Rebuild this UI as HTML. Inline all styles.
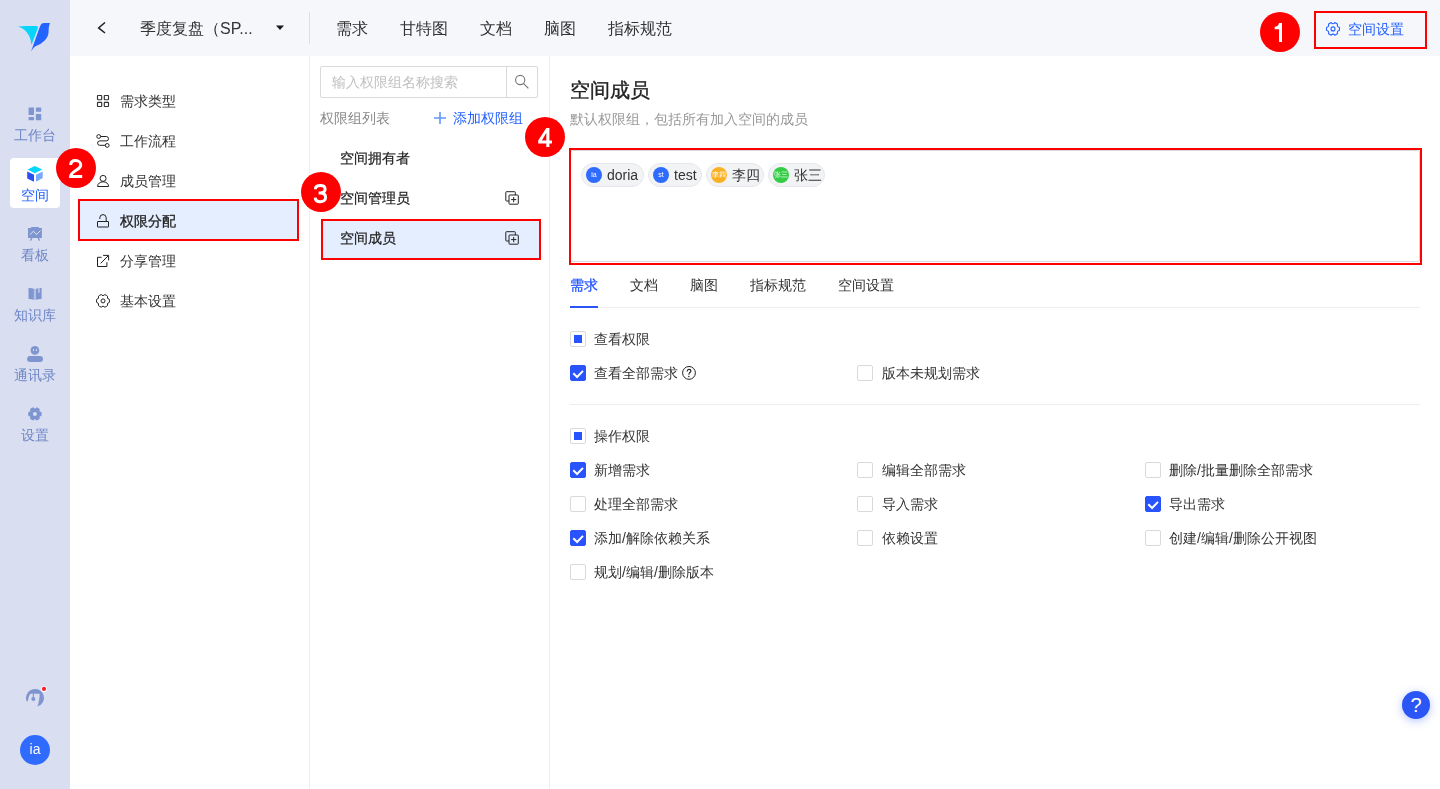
<!DOCTYPE html>
<html><head><meta charset="utf-8">
<style>
*{margin:0;padding:0;box-sizing:border-box}
html,body{width:1440px;height:789px;overflow:hidden;background:#fff;font-family:"Liberation Sans",sans-serif;color:#333}
.a{position:absolute}
.t{position:absolute;white-space:nowrap;line-height:1;will-change:transform}
#side{left:0;top:0;width:70px;height:789px;background:#d9def0}
#top{left:70px;top:0;width:1370px;height:56px;background:#f5f7fb}
.snav{left:0;width:70px;text-align:center;font-size:14px;color:#6f87c7}
.sico{position:absolute}
.red{position:absolute;border:2px solid #f00}
.num{position:absolute;width:40px;height:40px;border-radius:50%;background:#f00;color:#fff;font-weight:bold;font-size:25px;text-align:center;line-height:40px}
.menu{left:120px;font-size:14px;color:#333}
.mico{position:absolute;left:94px}
.nav{top:21px;font-size:16px;color:#333}
.tab{top:278px;font-size:14px;color:#333}
.md{-webkit-text-stroke:0.2px currentColor}
.cb{position:absolute;width:16px;height:16px;border:1px solid #d9d9d9;border-radius:2px;background:#fff}
.cb.on{background:#2953fd;border-color:#2953fd}
.cb svg{position:absolute;left:-1px;top:-1px}
.cb.ind::after{content:"";position:absolute;left:3px;top:3px;width:8px;height:8px;background:#2953fd}
.lbl{position:absolute;font-size:14px;color:#333;white-space:nowrap;line-height:1;will-change:transform}
.tag{position:absolute;will-change:transform;top:163px;height:24px;border-radius:12px;background:#f2f3f5;border:1px solid #e6e7eb}
.av{position:absolute;left:4px;top:3px;width:16px;height:16px;border-radius:50%;color:#fff;font-size:7px;line-height:16px;text-align:center;overflow:hidden}
.tn{position:absolute;left:25px;top:3px;font-size:14px;line-height:16px;color:#333;white-space:nowrap}
</style></head><body>
<!-- sidebar -->
<div id="side" class="a"></div>
<svg class="a" style="left:16px;top:20px" width="36" height="36" viewBox="0 0 36 36">
  <path d="M2 6.4 C8 6 14 5.9 20.5 5.9 Q22.4 6.2 21.9 8 L15.4 25 C15 19 13 10 2 6.4 Z" fill="#05d4fb"/>
  <path d="M15 31.5 L23.7 7.3 C24.5 4.5 26 3 28 3 L34 3 C33 5 32.6 8 32.6 11.4 C32.6 18 27 23 20.5 25.8 C18 27 16.5 29 15 31.5 Z" fill="#2563ff"/>
</svg>

<svg class="sico" style="left:24px;top:103px" width="22" height="22" viewBox="0 0 22 22"><g fill="#7f95cf"><rect x="4.6" y="4.5" width="5.4" height="7.4" rx="0.3"/><rect x="11.9" y="4.6" width="5.3" height="4.2" rx="0.3"/><rect x="4.6" y="13.9" width="5.4" height="3.3" rx="0.3"/><rect x="11.9" y="11" width="5.3" height="6.2" rx="0.3"/></g></svg>
<div class="t snav" style="top:128px">工作台</div>

<div class="a" style="left:10px;top:158px;width:50px;height:50px;background:#fff;border-radius:4px"></div>
<svg class="sico" style="left:24px;top:162px" width="22" height="24" viewBox="0 0 22 24"><path d="M10.8 4 L18.3 7.5 L10.8 11.2 L3.6 7.5Z" fill="#05d4fb"/><path d="M3.2 9.4 L10 12.8 L10 19.8 L3.2 16.4Z" fill="#2a4ff5"/><path d="M12 12.8 L18.7 9.4 L18.7 16.1 L12 19.8Z" fill="#7aa8ff"/></svg>
<div class="t snav" style="top:188px;color:#2360fd">空间</div>

<svg class="sico" style="left:24px;top:223px" width="22" height="22" viewBox="0 0 22 22"><path d="M4 5 L7.1 5 L7.1 3.9 L14.9 3.9 L14.9 5 L17.9 5 L17.9 15.1 L4 15.1Z" fill="#7f95cf"/><path d="M6 11.6 L9.5 8.2 L12.5 11.6 L16.5 7.5" stroke="#dfe4f3" stroke-width="1" fill="none"/><path d="M6.4 17.6 L7.8 15.1 M15.6 17.6 L14.2 15.1" stroke="#7f95cf" stroke-width="1.3"/></svg>
<div class="t snav" style="top:248px">看板</div>

<svg class="sico" style="left:24px;top:283px" width="22" height="22" viewBox="0 0 22 22"><path d="M4.5 4.9 C6.5 4.9 8.5 5.3 9.9 5.8 L9.9 16.8 C8.5 16.3 6.5 16.1 4.5 16.1Z" fill="#7f95cf"/><path d="M17.6 4.9 C15.6 4.9 13.4 5.3 12 5.8 L12 16.8 C13.4 16.3 15.6 16.1 17.6 16.1Z" fill="#7f95cf"/><rect x="9.9" y="5.8" width="2.1" height="11" fill="#b3bfe3"/><rect x="13.9" y="5" width="2" height="4.8" fill="#b3bfe3"/></svg>
<div class="t snav" style="top:308px">知识库</div>

<svg class="sico" style="left:24px;top:343px" width="22" height="22" viewBox="0 0 22 22"><circle cx="10.9" cy="7.4" r="4.3" fill="#7f95cf"/><rect x="9.1" y="6" width="0.9" height="2" fill="#dfe4f3"/><rect x="11.9" y="6" width="0.9" height="2" fill="#dfe4f3"/><rect x="3.1" y="13.1" width="15.9" height="5.9" rx="2.95" fill="#7f95cf"/></svg>
<div class="t snav" style="top:368px">通讯录</div>

<svg class="sico" style="left:24px;top:403px" width="22" height="22" viewBox="0 0 22 22"><path fill-rule="evenodd" d="M17.40 8.91 A6.80 6.80 0 0 1 17.40 12.89 Q14.52 12.99 15.87 15.54 A6.80 6.80 0 0 1 12.43 17.53 Q10.90 15.07 9.37 17.53 A6.80 6.80 0 0 1 5.93 15.54 Q7.28 12.99 4.40 12.89 A6.80 6.80 0 0 1 4.40 8.91 Q7.28 8.81 5.93 6.26 A6.80 6.80 0 0 1 9.37 4.27 Q10.90 6.73 12.43 4.27 A6.80 6.80 0 0 1 15.87 6.26 Q14.52 8.81 17.40 8.91Z M10.9 8.9 A2 2 0 1 0 10.9 12.9 A2 2 0 1 0 10.9 8.9Z" fill="#7f95cf"/></svg>
<div class="t snav" style="top:428px">设置</div>

<!-- bottom sidebar -->
<svg class="sico" style="left:22px;top:682px" width="28" height="28" viewBox="0 0 28 28"><path d="M4.6 19.2 A9 9 0 1 1 15.3 24.6 C16.8 21 17.8 15.5 17.6 11.7 L8.4 11.7 C7 13.5 6 16.5 5.9 19.2 Z" fill="#7f95cf"/><rect x="10.8" y="11.5" width="1.1" height="5" fill="#7f95cf"/><circle cx="11.3" cy="17.1" r="2" fill="#7f95cf"/><circle cx="22" cy="6.9" r="2.9" fill="#fff"/><circle cx="22" cy="6.9" r="2.1" fill="#f5222d"/></svg>
<div class="a" style="left:20px;top:735px;width:30px;height:30px;border-radius:50%;background:#2f6bff;color:#fff;font-size:14px;line-height:28px;text-align:center;will-change:transform">ia</div>

<!-- top bar -->
<div id="top" class="a"></div>
<svg class="a" style="left:96px;top:22px" width="12" height="13" viewBox="0 0 12 13"><path d="M9 0.5 L2.6 5.9 L9 11" stroke="#222" stroke-width="1.5" fill="none"/></svg>
<div class="t nav" style="left:140px">季度复盘（SP...</div>
<svg class="a" style="left:275px;top:25px" width="10" height="6" viewBox="0 0 10 6"><path d="M1 0.5 L9 0.5 L5 5Z" fill="#1a1a1a"/></svg>
<div class="a" style="left:309px;top:12px;width:1px;height:32px;background:#dcdfe6"></div>
<div class="t nav" style="left:336px">需求</div>
<div class="t nav" style="left:400px">甘特图</div>
<div class="t nav" style="left:480px">文档</div>
<div class="t nav" style="left:544px">脑图</div>
<div class="t nav" style="left:608px">指标规范</div>

<svg class="a" style="left:1324px;top:20px" width="18" height="18" viewBox="0 0 18 18"><path d="M15.31 7.33 A6.50 6.50 0 0 1 15.31 10.47 Q12.60 10.98 13.52 13.58 A6.50 6.50 0 0 1 10.79 15.15 Q9.00 13.05 7.21 15.15 A6.50 6.50 0 0 1 4.48 13.58 Q5.40 10.98 2.69 10.47 A6.50 6.50 0 0 1 2.69 7.33 Q5.40 6.82 4.48 4.22 A6.50 6.50 0 0 1 7.21 2.65 Q9.00 4.75 10.79 2.65 A6.50 6.50 0 0 1 13.52 4.22 Q12.60 6.82 15.31 7.33Z" stroke="#2360fd" stroke-width="1.1" fill="none" stroke-linejoin="round"/><circle cx="9" cy="8.9" r="2" stroke="#2360fd" stroke-width="1.1" fill="none"/></svg>
<div class="t" style="left:1348px;top:22px;font-size:14px;color:#2360fd">空间设置</div>
<div class="red" style="left:1314px;top:11px;width:113px;height:38px"></div>
<svg class="a" style="left:1260px;top:12px" width="40" height="40" viewBox="0 0 40 40"><circle cx="20" cy="20" r="20" fill="#f00"/><path d="M19 10.9 L22 10.9 L22 30 L19 30 L19 17.2 L14.7 17.2 L14.7 14.8 C17 14.7 18.6 13.4 19 10.9 Z" fill="#fff"/></svg>

<!-- panels borders -->
<div class="a" style="left:309px;top:56px;width:1px;height:733px;background:#eceef2"></div>
<div class="a" style="left:549px;top:56px;width:1px;height:733px;background:#eceef2"></div>

<!-- settings menu -->
<div class="a" style="left:80px;top:201px;width:217px;height:39px;background:#e5eefe"></div>
<svg class="mico" style="top:92px" width="18" height="18" viewBox="0 0 18 18"><g fill="none" stroke="#333" stroke-width="1.15"><rect x="3.5" y="3.5" width="4.2" height="4.2" rx="0.5"/><rect x="10.3" y="3.5" width="4.2" height="4.2" rx="0.5"/><rect x="3.5" y="10.3" width="4.2" height="4.2" rx="0.5"/><rect x="10.3" y="10.3" width="4.2" height="4.2" rx="0.5"/></g></svg>
<div class="t menu" style="top:94px">需求类型</div>
<svg class="mico" style="top:132px" width="18" height="18" viewBox="0 0 18 18"><g fill="none" stroke="#222" stroke-width="1"><circle cx="4.7" cy="4.5" r="1.9"/><circle cx="13.2" cy="13.4" r="1.9"/><path d="M6.6 4.5 L12.3 4.5 A2.2 2.2 0 0 1 12.3 8.9 L5.8 8.9 A2.2 2.2 0 0 0 5.8 13.3 L11.3 13.3"/></g></svg>
<div class="t menu" style="top:134px">工作流程</div>
<svg class="mico" style="top:172px" width="18" height="18" viewBox="0 0 18 18"><g fill="none" stroke="#222" stroke-width="1"><circle cx="9.1" cy="6.4" r="3"/><path d="M3.6 14.5 C3.6 11.6 6 9.8 9.1 9.8 C12.2 9.8 14.6 11.6 14.6 14.5 Z"/></g></svg>
<div class="t menu" style="top:174px">成员管理</div>
<svg class="mico" style="top:212px" width="18" height="18" viewBox="0 0 18 18"><g fill="none" stroke="#222" stroke-width="1"><path d="M5.8 7 L5.8 5.8 A3.2 3.2 0 0 1 12.2 5.8 L12.2 9.5"/><rect x="3.5" y="9.5" width="11" height="5.5" rx="0.3"/></g></svg>
<div class="t menu md" style="top:214px;-webkit-text-stroke:0.3px #222;color:#222">权限分配</div>
<svg class="mico" style="top:252px" width="18" height="18" viewBox="0 0 18 18"><g fill="none" stroke="#222" stroke-width="1"><path d="M7.6 5.3 L3.5 5.3 L3.5 14.5 L12.9 14.5 L12.9 10.2"/><path d="M9.1 3.4 L14.6 3.4 L14.6 8.4 M14.3 3.7 L6.6 11.4"/></g></svg>
<div class="t menu" style="top:254px">分享管理</div>
<svg class="mico" style="top:292px" width="18" height="18" viewBox="0 0 18 18"><path d="M15.31 7.33 A6.50 6.50 0 0 1 15.31 10.47 Q12.60 10.98 13.52 13.58 A6.50 6.50 0 0 1 10.79 15.15 Q9.00 13.05 7.21 15.15 A6.50 6.50 0 0 1 4.48 13.58 Q5.40 10.98 2.69 10.47 A6.50 6.50 0 0 1 2.69 7.33 Q5.40 6.82 4.48 4.22 A6.50 6.50 0 0 1 7.21 2.65 Q9.00 4.75 10.79 2.65 A6.50 6.50 0 0 1 13.52 4.22 Q12.60 6.82 15.31 7.33Z" stroke="#222" stroke-width="1" fill="none" stroke-linejoin="round"/><circle cx="9" cy="8.9" r="2" stroke="#222" stroke-width="1" fill="none"/></svg>
<div class="t menu" style="top:294px">基本设置</div>
<div class="red" style="left:78px;top:199px;width:221px;height:42px"></div>
<svg class="a" style="left:56px;top:148px" width="40" height="40" viewBox="0 0 40 40"><circle cx="20" cy="20" r="20" fill="#f00"/><path d="M14.7 17 C14.7 14 16.8 12.6 19.7 12.6 C22.6 12.6 24.7 14.3 24.7 16.9 C24.7 19.3 23 20.5 20.5 22 C17 24.1 14.7 25.6 14.6 28.6 L26.2 28.6" stroke="#fff" stroke-width="3" fill="none"/></svg>

<!-- permission groups -->
<div class="a" style="left:320px;top:66px;width:218px;height:32px;border:1px solid #d9d9d9;border-radius:2px"></div>
<div class="a" style="left:506px;top:66px;width:1px;height:32px;background:#d9d9d9"></div>
<div class="t" style="left:332px;top:75px;font-size:14px;color:#c0c0c0">输入权限组名称搜索</div>
<svg class="a" style="left:506px;top:66px" width="34" height="34" viewBox="0 0 34 34"><circle cx="14.2" cy="14" r="4.6" stroke="#777" stroke-width="1.1" fill="none"/><path d="M17.6 17.6 L22.4 22.4" stroke="#777" stroke-width="1.2"/></svg>
<div class="t" style="left:320px;top:111px;font-size:14px;color:#888">权限组列表</div>
<svg class="a" style="left:433px;top:111px" width="14" height="14" viewBox="0 0 14 14"><path d="M7 1 L7 13 M1 7 L13 7" stroke="#6497fb" stroke-width="1.6"/></svg>
<div class="t" style="left:453px;top:111px;font-size:14px;color:#2360fd">添加权限组</div>

<div class="a" style="left:323px;top:221px;width:216px;height:37px;background:#e5eefe"></div>
<div class="t md" style="left:340px;top:151px;font-size:14px;color:#222">空间拥有者</div>
<div class="t md" style="left:340px;top:191px;font-size:14px;color:#222">空间管理员</div>
<div class="t md" style="left:340px;top:231px;font-size:14px;color:#222">空间成员</div>
<svg class="a" style="left:500px;top:186px" width="24" height="24" viewBox="0 0 24 24"><g stroke="#222" stroke-width="1"><rect x="5.8" y="5.7" width="9.5" height="9.3" rx="0.6" fill="none"/><rect x="9" y="9" width="9.3" height="9.2" rx="0.6" fill="#fff"/><path d="M11.1 13.6 L16.3 13.6 M13.7 11 L13.7 16.2" fill="none"/></g></svg>
<svg class="a" style="left:500px;top:226px" width="24" height="24" viewBox="0 0 24 24"><g stroke="#222" stroke-width="1"><rect x="5.8" y="5.7" width="9.5" height="9.3" rx="0.6" fill="none"/><rect x="9" y="9" width="9.3" height="9.2" rx="0.6" fill="#e5eefe"/><path d="M11.1 13.6 L16.3 13.6 M13.7 11 L13.7 16.2" fill="none"/></g></svg>
<div class="red" style="left:321px;top:219px;width:220px;height:41px"></div>
<svg class="a" style="left:301px;top:172px" width="40" height="40" viewBox="0 0 40 40"><circle cx="20" cy="20" r="20" fill="#f00"/><path d="M14.4 17.2 C14.4 14.6 16.6 13.6 19.4 13.6 C22.2 13.6 24.1 15 24.1 17.3 C24.1 19.6 22.2 20.9 19.2 20.9 L17.6 20.9 M19.2 20.9 C22.6 20.9 24.6 22.6 24.6 25.3 C24.6 28.2 22.3 29.8 19.4 29.8 C16.4 29.8 14.3 28.4 14.2 25.6" stroke="#fff" stroke-width="3" fill="none"/></svg>

<!-- content -->
<div class="t md" style="left:570px;top:80px;font-size:20px;color:#222;-webkit-text-stroke:0.35px #222">空间成员</div>
<div class="t" style="left:570px;top:112px;font-size:14px;color:#999">默认权限组，包括所有加入空间的成员</div>
<div class="a" style="left:570px;top:150px;width:850px;height:112px;border:1px solid #d9d9d9;border-radius:2px"></div>
<div class="tag" style="left:581px;width:63px"><div class="av" style="background:#2f6bff">ia</div><div class="tn">doria</div></div>
<div class="tag" style="left:648px;width:54px"><div class="av" style="background:#2f6bff">st</div><div class="tn">test</div></div>
<div class="tag" style="left:706px;width:58px"><div class="av" style="background:#fbb024">李四</div><div class="tn">李四</div></div>
<div class="tag" style="left:768px;width:57px"><div class="av" style="background:#33cc44">张三</div><div class="tn">张三</div></div>
<div class="red" style="left:569px;top:148px;width:853px;height:117px"></div>
<svg class="a" style="left:525px;top:117px" width="40" height="40" viewBox="0 0 40 40"><circle cx="20" cy="20" r="20" fill="#f00"/><path fill-rule="evenodd" d="M21.3 11 L24.4 11 L24.4 23.4 L26.9 23.4 L26.9 26.6 L24.4 26.6 L24.4 30 L21.3 30 L21.3 26.6 L13.2 26.6 L13.2 23.6 Z M21.3 15.8 L16.9 23.4 L21.3 23.4 Z" fill="#fff"/></svg>

<!-- tabs -->
<div class="a" style="left:570px;top:307px;width:850px;height:1px;background:#eeeeee"></div>
<div class="a" style="left:570px;top:306px;width:28px;height:2px;background:#2a56f5"></div>
<div class="t tab" style="left:570px;color:#1f52ff;-webkit-text-stroke:0.25px #1f52ff">需求</div>
<div class="t tab" style="left:630px">文档</div>
<div class="t tab" style="left:690px">脑图</div>
<div class="t tab" style="left:750px">指标规范</div>
<div class="t tab" style="left:838px">空间设置</div>

<!-- permissions -->
<div class="cb ind" style="left:570px;top:331px"></div><div class="lbl" style="left:594px;top:332px">查看权限</div>
<div class="cb on" style="left:570px;top:365px"><svg width="16" height="16" viewBox="0 0 16 16"><path d="M3.3 8.3 L7.1 12 L13 5.9" stroke="#fff" stroke-width="2" fill="none"/></svg></div><div class="lbl" style="left:594px;top:366px">查看全部需求</div>
<svg class="a" style="left:682px;top:366px" width="14" height="14" viewBox="0 0 14 14"><circle cx="7" cy="6.9" r="6.4" stroke="#222" stroke-width="1" fill="none"/><path d="M5.2 5.6 C5.2 4 6 3.3 7.1 3.3 C8.2 3.3 8.9 4 8.9 4.9 C8.9 5.9 7.9 6.4 7.4 7 C7 7.5 6.9 8 6.9 8.8" stroke="#222" stroke-width="1.15" fill="none"/><circle cx="6.9" cy="10.4" r="0.75" fill="#222"/></svg>
<div class="cb" style="left:857px;top:365px"></div><div class="lbl" style="left:882px;top:366px">版本未规划需求</div>
<div class="a" style="left:570px;top:404px;width:850px;height:1px;background:#eeeeee"></div>

<div class="cb ind" style="left:570px;top:428px"></div><div class="lbl" style="left:594px;top:429px">操作权限</div>
<div class="cb on" style="left:570px;top:462px"><svg width="16" height="16" viewBox="0 0 16 16"><path d="M3.3 8.3 L7.1 12 L13 5.9" stroke="#fff" stroke-width="2" fill="none"/></svg></div><div class="lbl" style="left:594px;top:463px">新增需求</div>
<div class="cb" style="left:857px;top:462px"></div><div class="lbl" style="left:882px;top:463px">编辑全部需求</div>
<div class="cb" style="left:1145px;top:462px"></div><div class="lbl" style="left:1169px;top:463px">删除/批量删除全部需求</div>
<div class="cb" style="left:570px;top:496px"></div><div class="lbl" style="left:594px;top:497px">处理全部需求</div>
<div class="cb" style="left:857px;top:496px"></div><div class="lbl" style="left:882px;top:497px">导入需求</div>
<div class="cb on" style="left:1145px;top:496px"><svg width="16" height="16" viewBox="0 0 16 16"><path d="M3.3 8.3 L7.1 12 L13 5.9" stroke="#fff" stroke-width="2" fill="none"/></svg></div><div class="lbl" style="left:1169px;top:497px">导出需求</div>
<div class="cb on" style="left:570px;top:530px"><svg width="16" height="16" viewBox="0 0 16 16"><path d="M3.3 8.3 L7.1 12 L13 5.9" stroke="#fff" stroke-width="2" fill="none"/></svg></div><div class="lbl" style="left:594px;top:531px">添加/解除依赖关系</div>
<div class="cb" style="left:857px;top:530px"></div><div class="lbl" style="left:882px;top:531px">依赖设置</div>
<div class="cb" style="left:1145px;top:530px"></div><div class="lbl" style="left:1169px;top:531px">创建/编辑/删除公开视图</div>
<div class="cb" style="left:570px;top:564px"></div><div class="lbl" style="left:594px;top:565px">规划/编辑/删除版本</div>

<!-- help -->
<div class="a" style="left:1402px;top:691px;width:28px;height:28px;border-radius:50%;background:#2b56f5;box-shadow:0 2px 8px rgba(43,86,245,0.35);color:#fff;font-size:20px;line-height:28px;text-align:center">?</div>
</body></html>
